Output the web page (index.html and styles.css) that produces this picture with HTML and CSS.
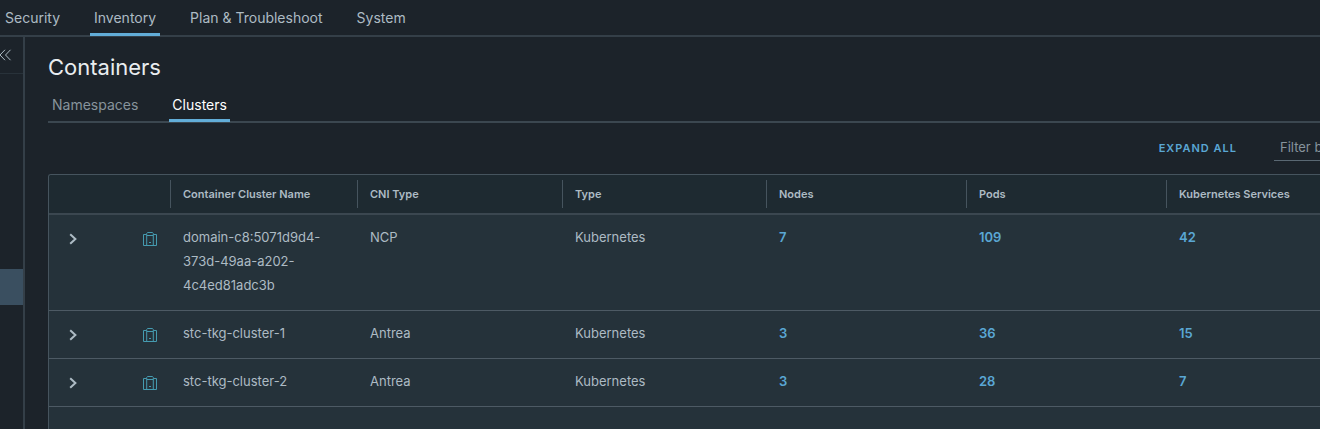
FILE: index.html
```html
<!DOCTYPE html>
<html lang="en">
<head>
<meta charset="utf-8">
<meta name="viewport" content="width=device-width, initial-scale=1">
<title>Containers</title>
<link rel="stylesheet" href="styles.css">
</head>
<body>
<svg class="sprite" aria-hidden="true">
  <symbol id="cluster" viewBox="0 0 14 14"><path d="M3.5 2.500H.5V13.500H13.500V2.500H10.500M3.700 13.500V1.500L4.500 .5H9.500L10.300 1.500V13.500M4 3.500H10M6 10.500H8"/></symbol>
  <symbol id="caret" viewBox="0 0 8 12"><path d="M1.2 1.2L6.4 6L1.2 10.8"/></symbol>
</svg>
<nav class="topnav">
  <a href="#">Security</a>
  <a href="#" class="active">Inventory</a>
  <a href="#">Plan &amp; Troubleshoot</a>
  <a href="#">System</a>
</nav>
<div class="shell">
  <aside class="sidebar">
    <button class="collapse" aria-label="Collapse sidebar"><svg width="12" height="12" viewBox="0 0 12 12"><path d="M5 .8L0 6L5 11.2M10.5 .8L5.5 6L10.5 11.2"/></svg></button>
    <a href="#" class="side-item" aria-label="Containers"></a>
  </aside>
  <main class="content">
    <h1>Containers</h1>
    <div class="tabs">
      <a href="#">Namespaces</a>
      <a href="#" class="active">Clusters</a>
    </div>
    <div class="toolbar">
      <button class="expand">EXPAND ALL</button>
      <input class="filter" type="text" placeholder="Filter by Name, Path and more" aria-label="Filter">
    </div>
    <div class="grid">
      <table>
        <colgroup><col class="c-expand"><col class="c-icon"><col class="c-name"><col class="c-cni"><col class="c-type"><col class="c-num"><col class="c-num"><col></colgroup>
        <thead>
          <tr><th></th><th></th><th><span>Container Cluster Name</span></th><th><span>CNI Type</span></th><th><span>Type</span></th><th><span>Nodes</span></th><th><span>Pods</span></th><th><span>Kubernetes Services</span></th></tr>
        </thead>
        <tbody>
          <tr><td><button class="caret" aria-label="Expand row"><svg width="8" height="12"><use href="#caret"/></svg></button></td><td><svg class="cluster" width="14" height="14"><use href="#cluster"/></svg></td><td>domain-c8:5071d9d4-<wbr>373d-49aa-a202-<wbr>4c4ed81adc3b</td><td>NCP</td><td>Kubernetes</td><td><a href="#">7</a></td><td><a href="#">109</a></td><td><a href="#">42</a></td></tr>
          <tr><td><button class="caret" aria-label="Expand row"><svg width="8" height="12"><use href="#caret"/></svg></button></td><td><svg class="cluster" width="14" height="14"><use href="#cluster"/></svg></td><td>stc-tkg-cluster-1</td><td>Antrea</td><td>Kubernetes</td><td><a href="#">3</a></td><td><a href="#">36</a></td><td><a href="#">15</a></td></tr>
          <tr><td><button class="caret" aria-label="Expand row"><svg width="8" height="12"><use href="#caret"/></svg></button></td><td><svg class="cluster" width="14" height="14"><use href="#cluster"/></svg></td><td>stc-tkg-cluster-2</td><td>Antrea</td><td>Kubernetes</td><td><a href="#">3</a></td><td><a href="#">28</a></td><td><a href="#">7</a></td></tr>
        </tbody>
      </table>
    </div>
  </main>
</div>
</body>
</html>
```
FILE: styles.css
```css
* { box-sizing: border-box; }
body {
  margin: 0;
  height: 100vh;
  display: flex;
  flex-direction: column;
  overflow: hidden;
  background: #1c232a;
  color: #adbbc4;
  font: 13px/24px Inter, "Liberation Sans", sans-serif;
}
a { color: inherit; text-decoration: none; }
button { border: 0; padding: 0; background: none; color: inherit; font: inherit; cursor: pointer; }
svg { display: block; fill: none; stroke: currentColor; }
.sprite { display: none; }

.topnav {
  display: flex;
  gap: 26px;
  padding-left: 1px;
  border-bottom: 2px solid #343f48;
  font-size: 14px;
}
.topnav a { padding: 6px 4px 3px; line-height: 24px; margin-bottom: -1px; border-bottom: 3px solid transparent; }
.topnav .active { border-color: #62add8; }

.shell { flex: 1; display: flex; min-height: 0; }
.sidebar { flex: 0 0 25px; border-right: 2px solid #343f48; }
.collapse { display: flex; align-items: center; width: 100%; height: 37px; border-bottom: 1px solid #28323a; }
.side-item { display: block; height: 36px; margin-top: 195px; background: #3a4f60; }

.content { flex: 1; min-width: 0; display: flex; flex-direction: column; padding: 14px 0 0 23px; }
h1 { margin: 0; color: #e9edf0; font-size: 22px; font-weight: 400; line-height: 32px; }
.tabs { display: flex; gap: 28px; padding-left: 1px; margin-top: 8px; border-bottom: 2px solid #3b4750; font-size: 14px; }
.tabs a { padding: 2px 3px; margin-bottom: -1px; border-bottom: 3px solid transparent; color: #87939c; }
.tabs .active { border-color: #62add8; color: #fff; }

.toolbar { display: flex; justify-content: flex-end; gap: 37px; padding: 11px 0 13px; }
.expand { align-self: center; color: #5aa7d4; font-size: 11px; font-weight: 600; letter-spacing: 1px; }
.filter {
  width: 46px;
  height: 27px;
  padding: 0 0 0 6px;
  border: 0;
  border-bottom: 1px solid #5a6873;
  border-radius: 0;
  background: none;
  color: #adbbc4;
  font: inherit;
}
.filter::placeholder { color: #87939c; opacity: 1; }

.grid { flex: 1; border: 1px solid #46545e; border-width: 1px 0 0 1px; border-radius: 3px 0 0 0; background: #25323a; }
table { width: 100%; table-layout: fixed; border-collapse: separate; border-spacing: 0; }
.c-expand { width: 80px; }
.c-icon { width: 41px; }
.c-name { width: 187px; }
.c-cni { width: 205px; }
.c-type { width: 204px; }
.c-num { width: 200px; }
th { height: 40px; padding: 5px 0; background: #1e2a31; border-bottom: 2px solid #3b4750; text-align: left; font-size: 11px; font-weight: 600; white-space: nowrap; }
th:first-child { border-top-left-radius: 2px; }
th span { display: block; padding: 2px 0 2px 12px; border-left: 1px solid #46545e; line-height: 24px; }
td { padding: 10px 36px 13px 13px; border-bottom: 1px solid #4d5a64; vertical-align: top; }
td:first-child { padding-left: 20px; }
td:nth-child(2) { padding: 17px 0 0 14px; }
td a { color: #5aa7d4; font-weight: 600; }
.caret { display: block; padding: 8px 0 4px; }
.caret svg { stroke-width: 2; }
.cluster { color: #459bb0; }
```
